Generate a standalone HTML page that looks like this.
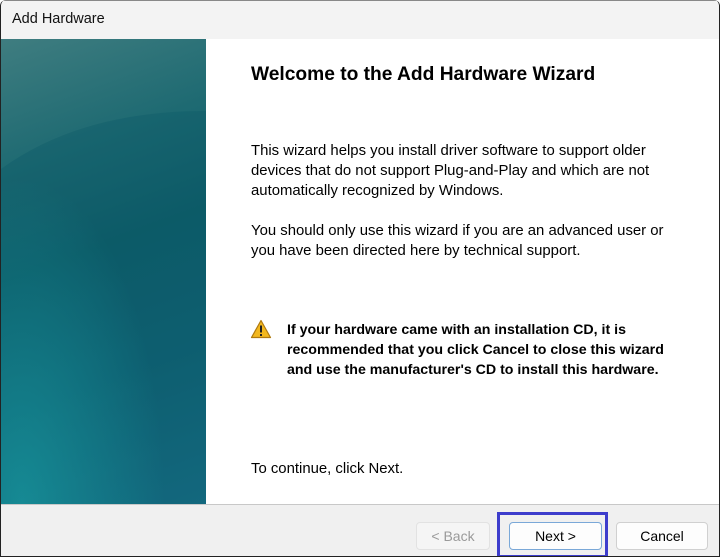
<!DOCTYPE html>
<html><head><style>
*{margin:0;padding:0;box-sizing:border-box}
body{width:720px;height:557px;overflow:hidden;background:#fff;font-family:"Liberation Sans",sans-serif;position:relative}
.win{position:absolute;left:0;top:0;width:720px;height:557px;border:1px solid #222;border-top:none;border-radius:6px 6px 0 0;overflow:hidden;background:#fff}
.title{position:absolute;left:-1px;top:0;width:720px;height:39px;background:#f3f3f3;border-top:1px solid #888;}
.title span{position:absolute;left:12px;top:10px;font-size:14.5px;color:#111}
.side{position:absolute;left:0px;top:39px;width:205px;height:465px;overflow:hidden;background:linear-gradient(160deg,#3f7d80 0%,#1e6a72 25%,#0d5c68 45%,#0f6275 70%,#17708a 100%)}
.foot{position:absolute;left:-1px;top:504px;width:720px;height:53px;background:#f0f0f0;border-top:1px solid #c8c8c8}
.t{position:absolute;white-space:nowrap;color:#000;font-size:14.9px}
.btn{position:absolute;top:522px;height:28px;border:1px solid #d0d0d0;border-radius:4px;background:#fdfdfd;font-size:14px;text-align:center;line-height:26px;color:#000}
</style></head><body>
<div class="win">
<div class="title"><span>Add Hardware</span></div>
<div class="side">
<svg width="205" height="465" style="position:absolute;left:0;top:0">
<defs><radialGradient id="g" cx="0.1" cy="1" r="0.7"><stop offset="0" stop-color="#189aa0" stop-opacity="0.7"/><stop offset="1" stop-color="#189aa0" stop-opacity="0"/></radialGradient></defs>
<path d="M0,130 Q80,72 205,72 L205,465 L0,465 Z" fill="#0b5866" opacity="0.35"/>
<rect width="205" height="465" fill="url(#g)"/>
</svg>
</div>
<div class="t" style="left:250px;top:64px;font-size:19.2px;font-weight:bold">Welcome to the Add Hardware Wizard</div>
<div class="t" style="left:250px;top:141px;line-height:20px">This wizard helps you install driver software to support older<br>devices that do not support Plug-and-Play and which are not<br>automatically recognized by Windows.</div>
<div class="t" style="left:250px;top:221px;line-height:20px">You should only use this wizard if you are an advanced user or<br>you have been directed here by technical support.</div>
<svg style="position:absolute;left:249px;top:319px" width="22" height="20" viewBox="0 0 22 20"><path d="M11 1.5 L20.5 18.5 L1.5 18.5 Z" fill="#f3b81f" stroke="#b07a10" stroke-width="1.2" stroke-linejoin="round"/><rect x="10" y="6.5" width="2" height="7" fill="#222"/><rect x="10" y="15" width="2" height="2" fill="#222"/></svg>
<div class="t" style="left:286px;top:320px;line-height:20px;font-weight:bold;font-size:14.2px">If your hardware came with an installation CD, it is<br>recommended that you click Cancel to close this wizard<br>and use the manufacturer's CD to install this hardware.</div>
<div class="t" style="left:250px;top:461px">To continue, click Next.</div>
<div class="foot"></div>
<div class="btn" style="left:415px;width:74px;color:#9a9a9a;background:#f5f5f5;border-color:#e2e2e2">&lt; Back</div>
<div class="btn" style="left:508px;width:93px;border-color:#7aa8d8">Next &gt;</div>
<div class="btn" style="left:615px;width:92px">Cancel</div>
<div style="position:absolute;left:496px;top:512px;width:111px;height:46px;border:3px solid #3d3dcc"></div>
</div>
</body></html>
